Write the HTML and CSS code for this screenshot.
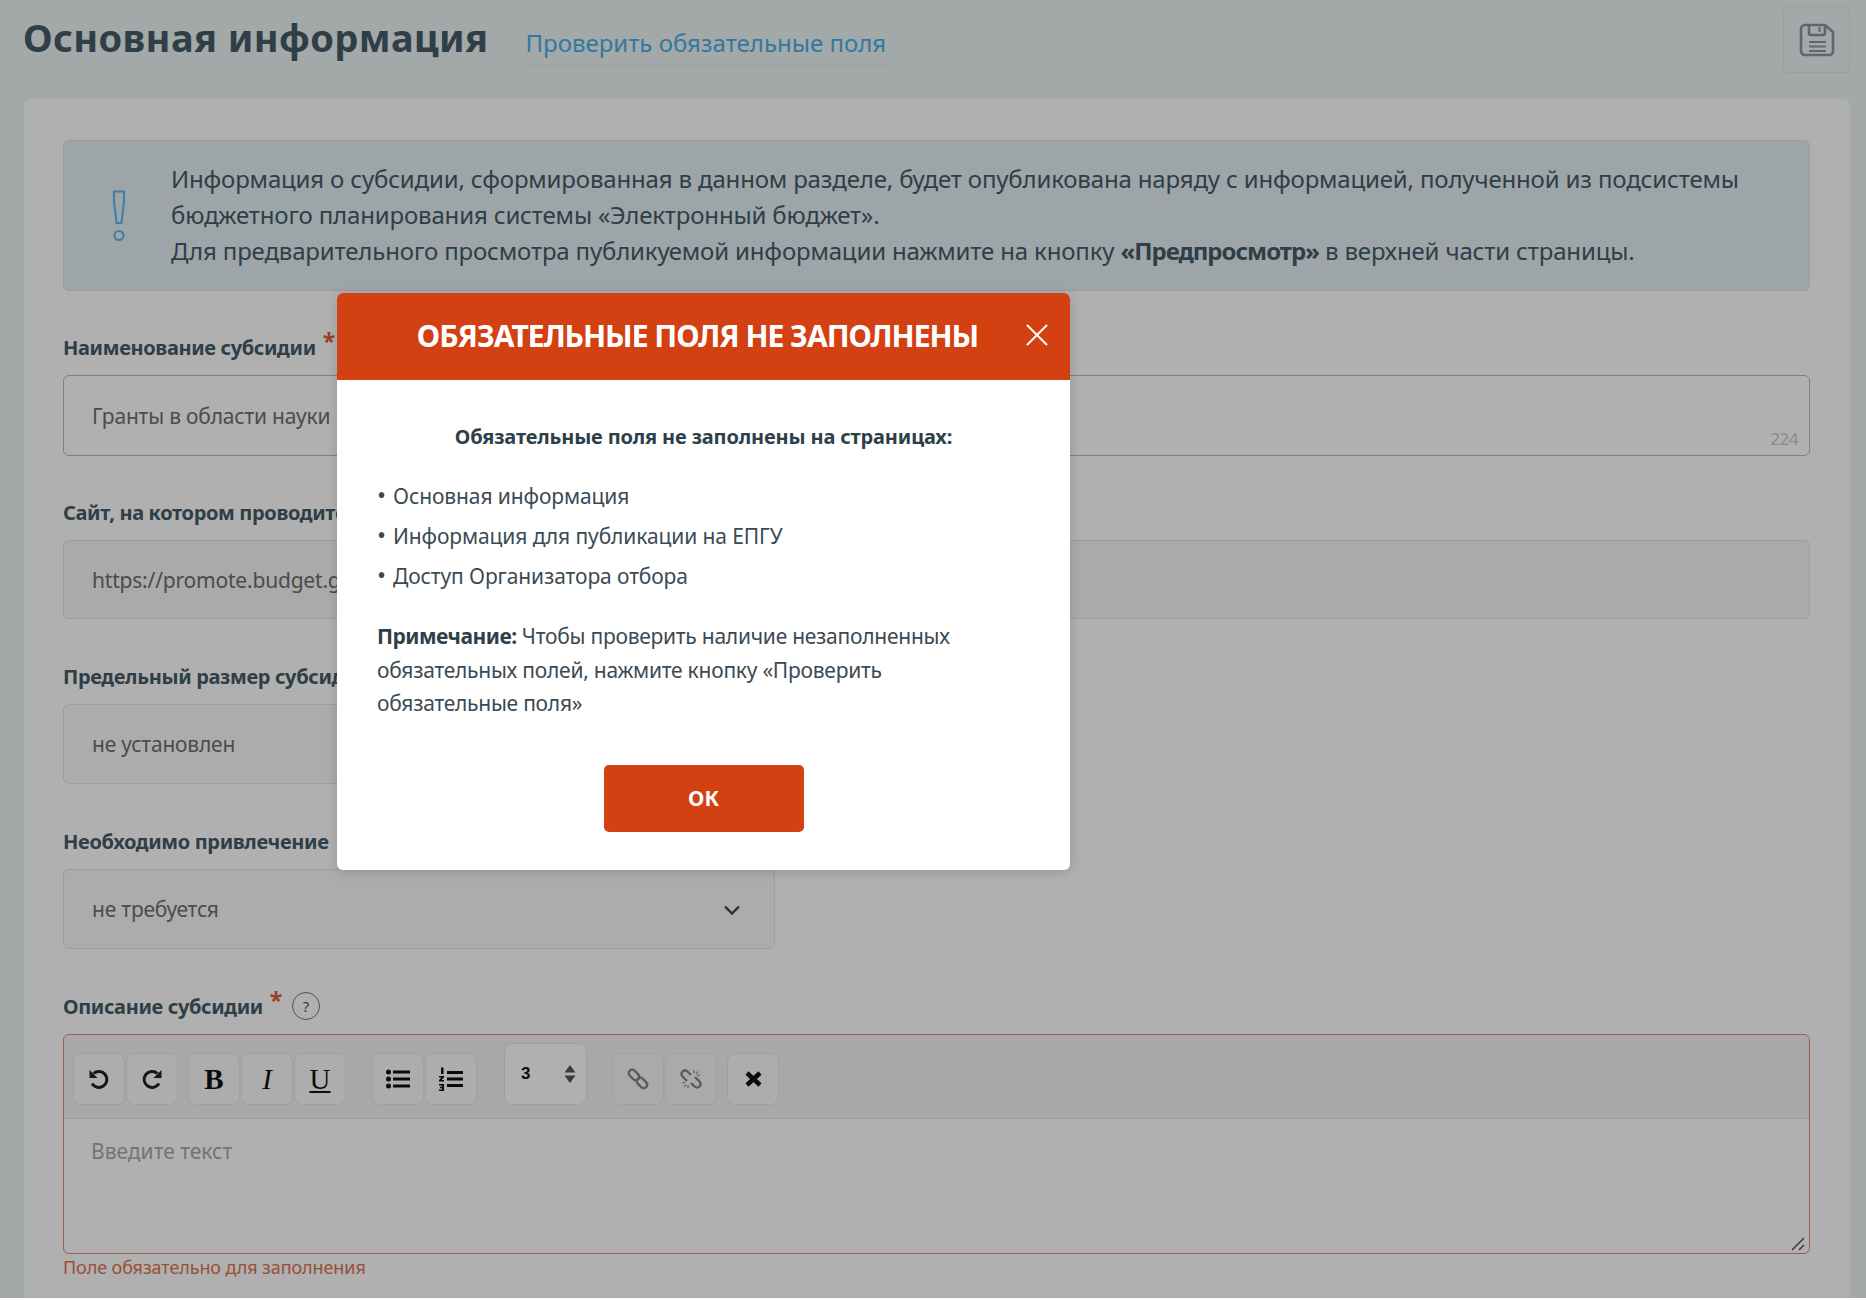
FILE: index.html
```html
<!DOCTYPE html>
<html lang="ru">
<head>
    <meta charset="utf-8">
    <title>Основная информация</title>
    <link rel="stylesheet" href="styles.css">
</head>
<body>
<div class="app">
    <header class="page-head">
        <h1 class="page-title">Основная информация</h1>
        <a class="check-link">Проверить обязательные поля</a>
        <button class="save-btn" aria-label="Сохранить">
            <svg width="36" height="34" viewBox="0 0 36 34" fill="none" stroke="#8a959b" stroke-width="2.600" stroke-linejoin="round">
                <path d="M2 6a4 4 0 0 1 4-4h20l8 7v19a4 4 0 0 1-4 4H6a4 4 0 0 1-4-4z"/>
                <path d="M10 2v8a2 2 0 0 0 2 2h12a2 2 0 0 0 2-2V2"/>
                <path d="M20.500 4v5" stroke-width="2"/>
                <path d="M10 19h17M10 23.500h17M10 28h17" stroke-width="2"/>
            </svg>
        </button>
    </header>

    <main class="card">
        <div class="info-box">
            <svg class="info-icon" width="14" height="52" viewBox="0 0 14 52" fill="none" stroke="#5ab8ea" stroke-width="2">
                <path d="M2 1.500h10v10L9.500 33h-5L2 11.500z"/>
                <circle cx="7" cy="45.500" r="4.500"/>
            </svg>
            <p class="info-text">Информация о субсидии, сформированная в данном разделе, будет опубликована наряду с информацией, полученной из подсистемы<br>бюджетного планирования системы «Электронный бюджет».<br>Для предварительного просмотра публикуемой информации нажмите на кнопку <b>«Предпросмотр»</b> в верхней части страницы.</p>
        </div>

        <div class="field-group">
            <label class="field-label">Наименование субсидии <span class="req">*</span></label>
            <div class="field field-ok">Гранты в области науки<span class="counter">224</span></div>
        </div>
        <div class="field-group">
            <label class="field-label">Сайт, на котором проводится отбор</label>
            <div class="field field-off">https://promote.budget.gov.ru</div>
        </div>
        <div class="field-group">
            <label class="field-label">Предельный размер субсидии</label>
            <div class="field field-select">не установлен</div>
        </div>
        <div class="field-group">
            <label class="field-label">Необходимо привлечение</label>
            <div class="field field-select">не требуется
                <svg class="chevron" width="18" height="10" viewBox="0 0 18 10" fill="none" stroke="#3c4548" stroke-width="2.400"><path d="M2 1.500l7 7 7-7"/></svg>
            </div>
        </div>
        <div class="field-group">
            <label class="field-label">Описание субсидии <span class="req">*</span>
                <span class="help">?</span>
            </label>
            <div class="editor">
                <div class="toolbar">
                    <div class="tool-group">
                        <button class="tool"><svg width="22" height="22" viewBox="0 0 22 22" fill="none" stroke="#222" stroke-width="3"><path d="M5.500 5.500A8 8 0 1 1 4 15.500"/><path d="M1.500 2v8h8z" fill="#222" stroke="none"/></svg></button>
                        <button class="tool"><svg width="22" height="22" viewBox="0 0 22 22" fill="none" stroke="#222" stroke-width="3"><path d="M16.500 5.500A8 8 0 1 0 18 15.500"/><path d="M20.500 2v8h-8z" fill="#222" stroke="none"/></svg></button>
                    </div>
                    <div class="tool-group">
                        <button class="tool tool-text tool-b">B</button>
                        <button class="tool tool-text tool-i">I</button>
                        <button class="tool tool-text tool-u">U</button>
                    </div>
                    <div class="tool-group">
                        <button class="tool"><svg width="24" height="20" viewBox="0 0 24 20" fill="#111"><circle cx="2.500" cy="3" r="2.500"/><circle cx="2.500" cy="10" r="2.500"/><circle cx="2.500" cy="17" r="2.500"/><path d="M7 1.500h17v3H7zM7 8.500h17v3H7zM7 15.500h17v3H7z"/></svg></button>
                        <button class="tool"><svg width="24" height="24" viewBox="0 0 24 24" fill="#111"><path d="M8 4h16v3H8zM8 10.500h16v3H8zM8 17h16v3H8z"/><path d="M2 .5h2.500v6.500H2zM0 9h5v1.500L2.500 13H5v1.500H0V13l2.500-2.500H0zM0 17h5v7H0v-1.500h3v-1.300H1v-1.400h2v-1.300H0z"/></svg></button>
                    </div>
                    <button class="tool tool-size">
                        <span class="size-val">3</span>
                        <svg width="12" height="18" viewBox="0 0 12 18" fill="#555"><path d="M6 0l5.500 7.500H.5zM6 18L.5 10.500h11z"/></svg>
                    </button>
                    <div class="tool-group">
                        <button class="tool tool-off"><svg width="22" height="22" viewBox="0 0 22 22" fill="none" stroke="#858585" stroke-width="2.400"><rect x="1" y="3.500" width="12" height="7" rx="3.500" transform="rotate(45 7 7)"/><rect x="9" y="11.500" width="12" height="7" rx="3.500" transform="rotate(45 15 15)"/></svg></button>
                        <button class="tool tool-off"><svg width="22" height="22" viewBox="0 0 22 22" fill="none" stroke="#858585" stroke-width="2.400"><path d="M7 13L2.500 8.500a3.500 3.500 0 0 1 5-5L11 7"/><path d="M15 9l4.500 4.500a3.500 3.500 0 0 1-5 5L11 15"/><path d="M14 2v3M18 3.500L16 6M20 7l-3 .5M2 15l3-.5M4 19l2-2.500M8 20v-3" stroke-width="1.200"/></svg></button>
                    </div>
                    <button class="tool"><svg width="17" height="16" viewBox="0 0 17 16" stroke="#111" stroke-width="4.500"><path d="M2 2l13 12M15 2L2 14"/></svg></button>
                </div>
                <div class="editor-body">Введите текст
                    <svg class="resize" width="14" height="14" viewBox="0 0 14 14" stroke="#555" stroke-width="1.500"><path d="M1 13L13 1M8 13l5-5"/></svg>
                </div>
            </div>
            <div class="field-error">Поле обязательно для заполнения</div>
        </div>
    </main>

    <div class="overlay"></div>

    <section class="modal">
        <div class="modal-head">
            <h2 class="modal-title">ОБЯЗАТЕЛЬНЫЕ ПОЛЯ НЕ ЗАПОЛНЕНЫ</h2>
            <svg class="modal-close" width="24" height="24" viewBox="0 0 24 24" stroke="#fff" stroke-width="2"><path d="M2 2l20 20M22 2L2 22"/></svg>
        </div>
        <div class="modal-body">
            <p class="modal-lead">Обязательные поля не заполнены на страницах:</p>
            <ul class="modal-list">
                <li><span class="dot">•</span>Основная информация</li>
                <li><span class="dot">•</span>Информация для публикации на ЕПГУ</li>
                <li><span class="dot">•</span>Доступ Организатора отбора</li>
            </ul>
            <p class="modal-note"><b>Примечание:</b> Чтобы проверить наличие незаполненных обязательных полей, нажмите кнопку «Проверить обязательные поля»</p>
            <button class="modal-ok">ОК</button>
        </div>
    </section>
</div>
</body>
</html>
```

FILE: styles.css
```css
* {
    box-sizing: border-box;
}
html, body {
    margin: 0;
    background: #fff;
}
body {
    font-family: "Noto Sans", "Open Sans", sans-serif;
    color: #445b67;
}
.app {
    position: relative;
    height: 1298px;
    overflow: hidden;
    background: #edf3f5;
}

/* head */
.page-head {
    display: flex;
    align-items: flex-start;
    height: 99px;
    padding: 6px 16px 0 23px;
}
.page-title {
    margin: -2px 0 0;
    font-size: 38px;
    line-height: 66px;
    font-weight: 700;
    letter-spacing: 0.4px;
}
.check-link {
    margin: 15px 0 0 37px;
    font-size: 24px;
    line-height: 44px;
    color: #4bb0e6;
    border-bottom: 1px dotted #cbdbe3;
}
.save-btn {
    margin-left: auto;
    width: 67px;
    height: 67px;
    background: transparent;
    border: 1px solid #dfe6ea;
    border-radius: 5px;
    display: flex;
    align-items: center;
    justify-content: center;
    padding: 0;
}

/* card */
.card {
    margin: 0 16px 0 24px;
    height: 1300px;
    padding: 41px 40px 41px 39px;
    background: #fff;
    border-radius: 6px;
}
.info-box {
    display: flex;
    align-items: center;
    height: 151px;
    padding-left: 48px;
    background: #e4eff5;
    border: 1px solid #d8e4ea;
    border-radius: 6px;
}
.info-icon {
    flex: none;
    margin-right: 45px;
}
.info-text {
    margin: -2px 0 0;
    font-size: 24px;
    line-height: 36px;
    letter-spacing: -0.16px;
    white-space: nowrap;
}
.info-text b {
    letter-spacing: -1px;
}

/* fields */
.field-group {
    margin-bottom: 43px;
}
.info-box + .field-group {
    margin-top: 42px;
    margin-bottom: 42px;
}
.field-label {
    display: flex;
    align-items: center;
    height: 28px;
    margin-bottom: 14px;
    font-size: 20px;
    font-weight: 700;
    letter-spacing: -0.35px;
    white-space: pre;
}
.req {
    align-self: flex-start;
    margin: -3px 0 0 2px;
    color: #d8603c;
    font-size: 23px;
    line-height: 22px;
}
.help {
    display: inline-flex;
    align-items: center;
    justify-content: center;
    width: 28px;
    height: 28px;
    margin-left: 10px;
    border: 1.500px solid #6f7a80;
    border-radius: 50%;
    font-size: 15px;
    font-weight: 400;
    letter-spacing: 0;
}
.field {
    position: relative;
    display: flex;
    align-items: center;
    height: 80px;
    padding: 0 28px;
    font-size: 21px;
    letter-spacing: -0.2px;
    color: #6e6e6e;
    border: 1px solid #e4e4e4;
    border-radius: 6px;
}
.field-ok {
    border-color: #9cc8b2;
    height: 81px;
}
.field-off {
    height: 79px;
    background: #f6f6f6;
}
.field-select {
    width: 712px;
    background: #fafafa;
}
.counter {
    position: absolute;
    right: 11px;
    bottom: 5px;
    font-size: 17px;
    letter-spacing: -0.5px;
    color: #cbcbcb;
}
.chevron {
    position: absolute;
    right: 33px;
    top: 35px;
}

/* editor */
.editor {
    border: 1px solid #d98a72;
    border-radius: 6px;
    height: 220px;
}
.toolbar {
    display: flex;
    align-items: flex-end;
    height: 84px;
    padding: 0 9px 13px;
    background: #f3f3f3;
    border-bottom: 1px solid #ebebeb;
    border-radius: 6px 6px 0 0;
}
.tool-group {
    display: flex;
    gap: 1px;
}
.tool-group:nth-child(1) {
    margin-right: 10px;
}
.tool-group:nth-child(2) {
    margin-right: 26px;
}
.tool-group:nth-child(3) {
    margin-right: 27px;
}
.tool-group:nth-child(5) {
    margin-right: 10px;
}
.tool {
    display: flex;
    align-items: center;
    justify-content: center;
    width: 52px;
    height: 52px;
    padding: 0;
    background: #fbfbfb;
    border: 1px solid #e8e8e8;
    border-radius: 8px;
    color: #111;
}
.tool-off {
    background: #f6f6f6;
}
.tool-text {
    font-family: "Liberation Serif", serif;
    font-size: 29px;
}
.tool-b {
    font-weight: 700;
}
.tool-i {
    font-style: italic;
}
.tool-u {
    text-decoration: underline;
}
.tool-size {
    width: 83px;
    height: 62px;
    margin-right: 25px;
    justify-content: space-between;
    padding: 0 10px 0 16px;
    background: #ffffff;
}
.size-val {
    font-size: 17px;
    font-weight: 700;
}
.editor-body {
    position: relative;
    height: 134px;
    padding: 18px 27px;
    font-size: 21px;
    color: #a8a8a8;
}
.resize {
    position: absolute;
    right: 4px;
    bottom: 2px;
}
.field-error {
    margin-top: 1px;
    font-size: 18px;
    line-height: 24px;
    letter-spacing: -0.1px;
    color: #e0734f;
}

/* modal */
.overlay {
    position: absolute;
    inset: 0;
    background: rgba(0, 0, 0, 0.31);
}
.modal {
    position: absolute;
    left: 337px;
    top: 293px;
    width: 733px;
    height: 577px;
    background: #fff;
    border-radius: 6px;
    box-shadow: 0 2px 12px rgba(0, 0, 0, 0.15);
    color: #3a4a54;
}
.modal-head {
    position: relative;
    height: 87px;
    display: flex;
    align-items: center;
    justify-content: center;
    padding: 0 12px 2px 0;
    background: #d34011;
    border-radius: 6px 6px 0 0;
}
.modal-title {
    margin: 0;
    font-size: 30px;
    font-weight: 700;
    letter-spacing: -1px;
    color: #fff;
    white-space: nowrap;
}
.modal-close {
    position: absolute;
    right: 21px;
    top: 30px;
}
.modal-body {
    padding: 40px 40px 0;
    font-size: 21px;
}
.modal-lead {
    margin: 0;
    font-size: 20px;
    font-weight: 700;
    line-height: 34px;
    letter-spacing: -0.15px;
    text-align: center;
    color: #2e3f49;
}
.modal-list {
    margin: 22px 0 0;
    padding: 0;
    list-style: none;
    line-height: 40px;
    letter-spacing: -0.1px;
}
.dot {
    display: inline-block;
    width: 16px;
    font-size: 24px;
    line-height: 1;
}
.modal-note {
    max-width: 590px;
    margin: 24px 0 0;
    line-height: 33.500px;
    letter-spacing: -0.25px;
}
.modal-note b {
    letter-spacing: -0.5px;
    color: #2e3f49;
}
.modal-ok {
    display: block;
    width: 200px;
    height: 67px;
    margin: 44px auto 0;
    background: #d34011;
    border: none;
    border-radius: 5px;
    color: #fff;
    font: 700 21px "Noto Sans", sans-serif;
}
```
